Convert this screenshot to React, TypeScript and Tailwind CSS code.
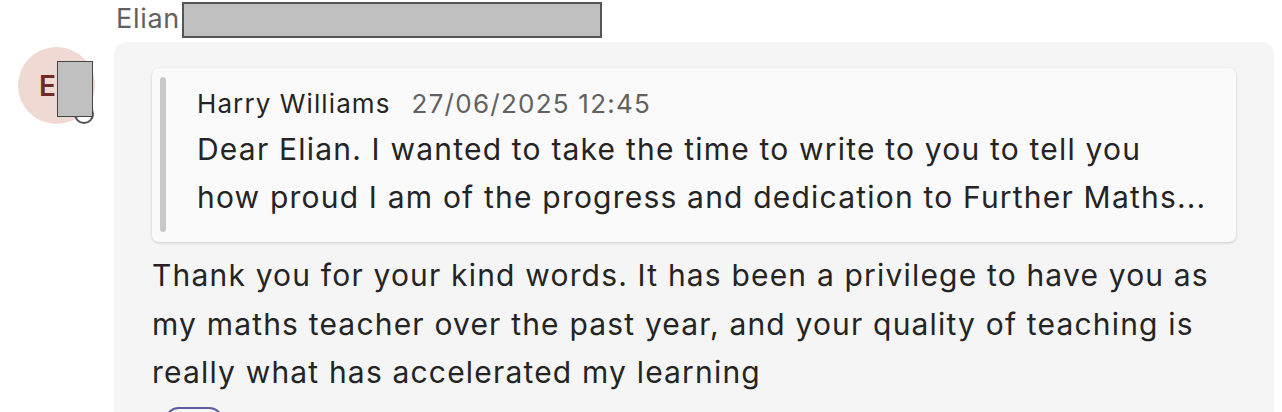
import React from "react";

export default function App() {
  return (
    <div className="w-[1282px] h-[412px] overflow-hidden bg-white" style={{ fontFamily: "Inter, 'Noto Sans', sans-serif" }}>
      <div className="flex items-start h-[42px] pl-[116px]">
        <span className="mt-[1px] text-[27px] leading-[36px] text-[#616161] tracking-[0.7px]">Elian</span>
        <div className="ml-[2px] mt-[2px] w-[420px] h-[36px] bg-[#c0c0c0] border-2 border-[#555555]" />
      </div>
      <div className="flex">
        <div className="w-[114px] shrink-0 relative">
          <div className="absolute left-[18px] top-[5px] w-[77px] h-[77px] rounded-full bg-[#efd9d2] flex items-center">
            <span className="ml-[21px] text-[28px] font-semibold text-[#6e2b25]">E</span>
          </div>
          <div className="absolute left-[74px] top-[62px] w-[20px] h-[20px] rounded-full border-2 border-[#555555]" />
          <div className="absolute left-[57px] top-[19px] w-[36px] h-[56px] bg-[#c0c0c0] border border-[#444444]" />
        </div>
        <div className="w-[1160px] bg-[#f5f5f5] rounded-[12px] pt-[26px] pl-[38px] pr-[38px] pb-[40px]">
          <div className="flex bg-[#fafafa] rounded-[7px] shadow-[0_1px_3px_rgba(0,0,0,0.18)] h-[174px]">
            <div className="ml-[8px] mt-[9px] mb-[10px] w-[6px] rounded-full bg-[#c8c8c8]" />
            <div className="pl-[31px] pt-[17px] text-[#242424]">
              <div className="flex items-baseline leading-[38px]">
                <span className="text-[26px] tracking-[1.1px]">Harry Williams</span>
                <span className="ml-[21px] text-[26px] tracking-[1.25px] text-[#616161]">27/06/2025 12:45</span>
              </div>
              <div className="mt-[2px] text-[30px] leading-[48px] tracking-[1.2px]">
                <div>Dear Elian. I wanted to take the time to write to you to tell you</div>
                <div>how proud I am of the progress and dedication to Further Maths...</div>
              </div>
            </div>
          </div>
          <div className="mt-[9px] text-[30px] leading-[48.5px] tracking-[1.18px] text-[#242424]">
            <div>Thank you for your kind words. It has been a privilege to have you as</div>
            <div>my maths teacher over the past year, and your quality of teaching is</div>
            <div>really what has accelerated my learning</div>
          </div>
          <div className="mt-[10px] ml-[12px] w-[60px] h-[30px] rounded-full border-2 border-[#5b5fa2]" />
        </div>
      </div>
    </div>
  );
}
